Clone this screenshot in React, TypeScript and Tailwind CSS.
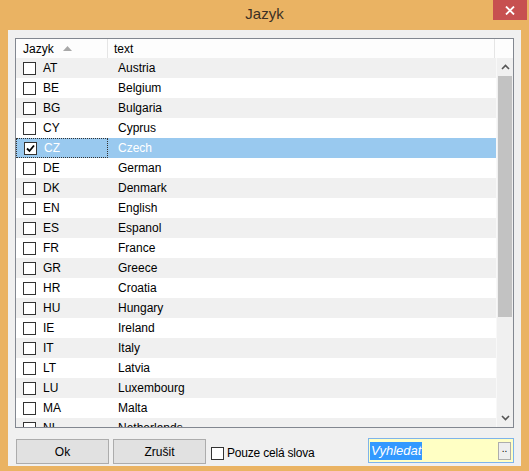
import React from "react";

const rows: [string, string][] = [
  ["AT", "Austria"],
  ["BE", "Belgium"],
  ["BG", "Bulgaria"],
  ["CY", "Cyprus"],
  ["CZ", "Czech"],
  ["DE", "German"],
  ["DK", "Denmark"],
  ["EN", "English"],
  ["ES", "Espanol"],
  ["FR", "France"],
  ["GR", "Greece"],
  ["HR", "Croatia"],
  ["HU", "Hungary"],
  ["IE", "Ireland"],
  ["IT", "Italy"],
  ["LT", "Latvia"],
  ["LU", "Luxembourg"],
  ["MA", "Malta"],
  ["NL", "Netherlands"],
];

function Box({ checked }: { checked?: boolean }) {
  return (
    <span className="flex h-[13px] w-[13px] shrink-0 items-center justify-center border border-[#333333] bg-white">
      {checked && (
        <svg width="9" height="9" viewBox="0 0 9 9">
          <path d="M1 4.5 L3.5 7 L8 1.5" fill="none" stroke="#000" strokeWidth="1.8" />
        </svg>
      )}
    </span>
  );
}

function Chevron({ up }: { up?: boolean }) {
  return (
    <svg width="9" height="6" viewBox="0 0 9 6">
      <path d={up ? "M1 5 L4.5 1.5 L8 5" : "M1 1 L4.5 4.5 L8 1"} fill="none" stroke="#555" strokeWidth="1.6" />
    </svg>
  );
}

export default function App() {
  return (
    <div className="flex h-[471px] w-[529px] flex-col bg-[#EAB363] font-['Liberation_Sans',Arial,sans-serif] text-[12px] text-black">
      <div className="relative flex h-[30px] shrink-0 items-center justify-center">
        <span className="pb-[2px] text-[15px] text-[#3b3024]">Jazyk</span>
        <div className="absolute right-[2px] top-0 flex h-[20px] w-[34px] items-center justify-center bg-[#C75050]">
          <svg width="10" height="9" viewBox="0 0 10 9">
            <path d="M1 0.5 L9 8.5 M9 0.5 L1 8.5" stroke="#fff" strokeWidth="1.8" />
          </svg>
        </div>
      </div>

      <div className="mx-[8px] mb-[5px] flex flex-1 flex-col bg-[#F0F0F0] px-[7px] pt-[8px]">
        <div className="flex h-[390px] flex-col overflow-hidden border border-[#828790] bg-white">
          <div className="flex h-[19px] shrink-0 items-center bg-[#FDFDFD]">
            <div className="flex h-full w-[92px] items-center gap-[9px] border-r border-[#E5E5E5] pl-[7px]">
              <span>Jazyk</span>
              <svg width="9" height="5" viewBox="0 0 9 5">
                <path d="M0 5 L4.5 0 L9 5 Z" fill="#A8A8A8" />
              </svg>
            </div>
            <div className="flex h-full w-[387px] items-center border-r border-[#E5E5E5] pl-[6px]">text</div>
          </div>
          <div className="flex min-h-0 flex-1">
            <div className="flex min-w-0 flex-1 flex-col">
              {rows.map(([code, name], i) => {
                const sel = code === "CZ";
                return (
                  <div
                    key={code}
                    className={`flex h-[20px] shrink-0 items-center ${sel ? "bg-[#99C9EF] text-white" : i % 2 === 0 ? "bg-[#F0F0F0]" : "bg-white"}`}
                  >
                    <div
                      className={`flex h-full w-[92px] shrink-0 items-center gap-[7px] pl-[7px] ${sel ? "border border-dotted border-[#333]" : ""}`}
                    >
                      <Box checked={sel} />
                      <span>{code}</span>
                    </div>
                    <div className="pl-[10px]">{name}</div>
                  </div>
                );
              })}
            </div>
            <div className="flex w-[17px] shrink-0 flex-col border-l border-[#F8F8F8] bg-[#F0F0F0]">
              <div className="flex h-[18px] shrink-0 items-center justify-center">
                <Chevron up />
              </div>
              <div className="mx-[1px] h-[241px] shrink-0 bg-[#C2C2C2]" />
              <div className="flex-1" />
              <div className="flex h-[18px] shrink-0 items-center justify-center">
                <Chevron />
              </div>
            </div>
          </div>
        </div>

        <div className="mt-[10px] flex items-start">
          <button className="ml-[1px] mt-[1px] h-[25px] w-[93px] border border-[#ACACAC] bg-[#E1E1E1]">Ok</button>
          <button className="ml-[4px] mt-[1px] h-[25px] w-[93px] border border-[#ACACAC] bg-[#E1E1E1]">Zrušit</button>
          <div className="ml-[5px] mt-[6px] flex items-center gap-[3px]">
            <span className="h-[13px] w-[13px] border border-[#333333] bg-white" />
            <span className="tracking-[-0.2px]">Pouze celá slova</span>
          </div>
          <div className="ml-auto flex h-[25px] w-[146px] items-center border border-[#7EB4EA] bg-[#FFFFC4] pl-[1px] pr-[2px]">
            <span className="bg-[#3399FF] px-[1px] text-[13px] leading-[18px] text-white italic">Vyhledat</span>
            <span className="ml-auto flex h-[18px] w-[13px] items-start justify-center border border-[#ADADAD] bg-[#EEEEEE] text-[10px] leading-[12px]">..</span>
          </div>
        </div>
      </div>
    </div>
  );
}
